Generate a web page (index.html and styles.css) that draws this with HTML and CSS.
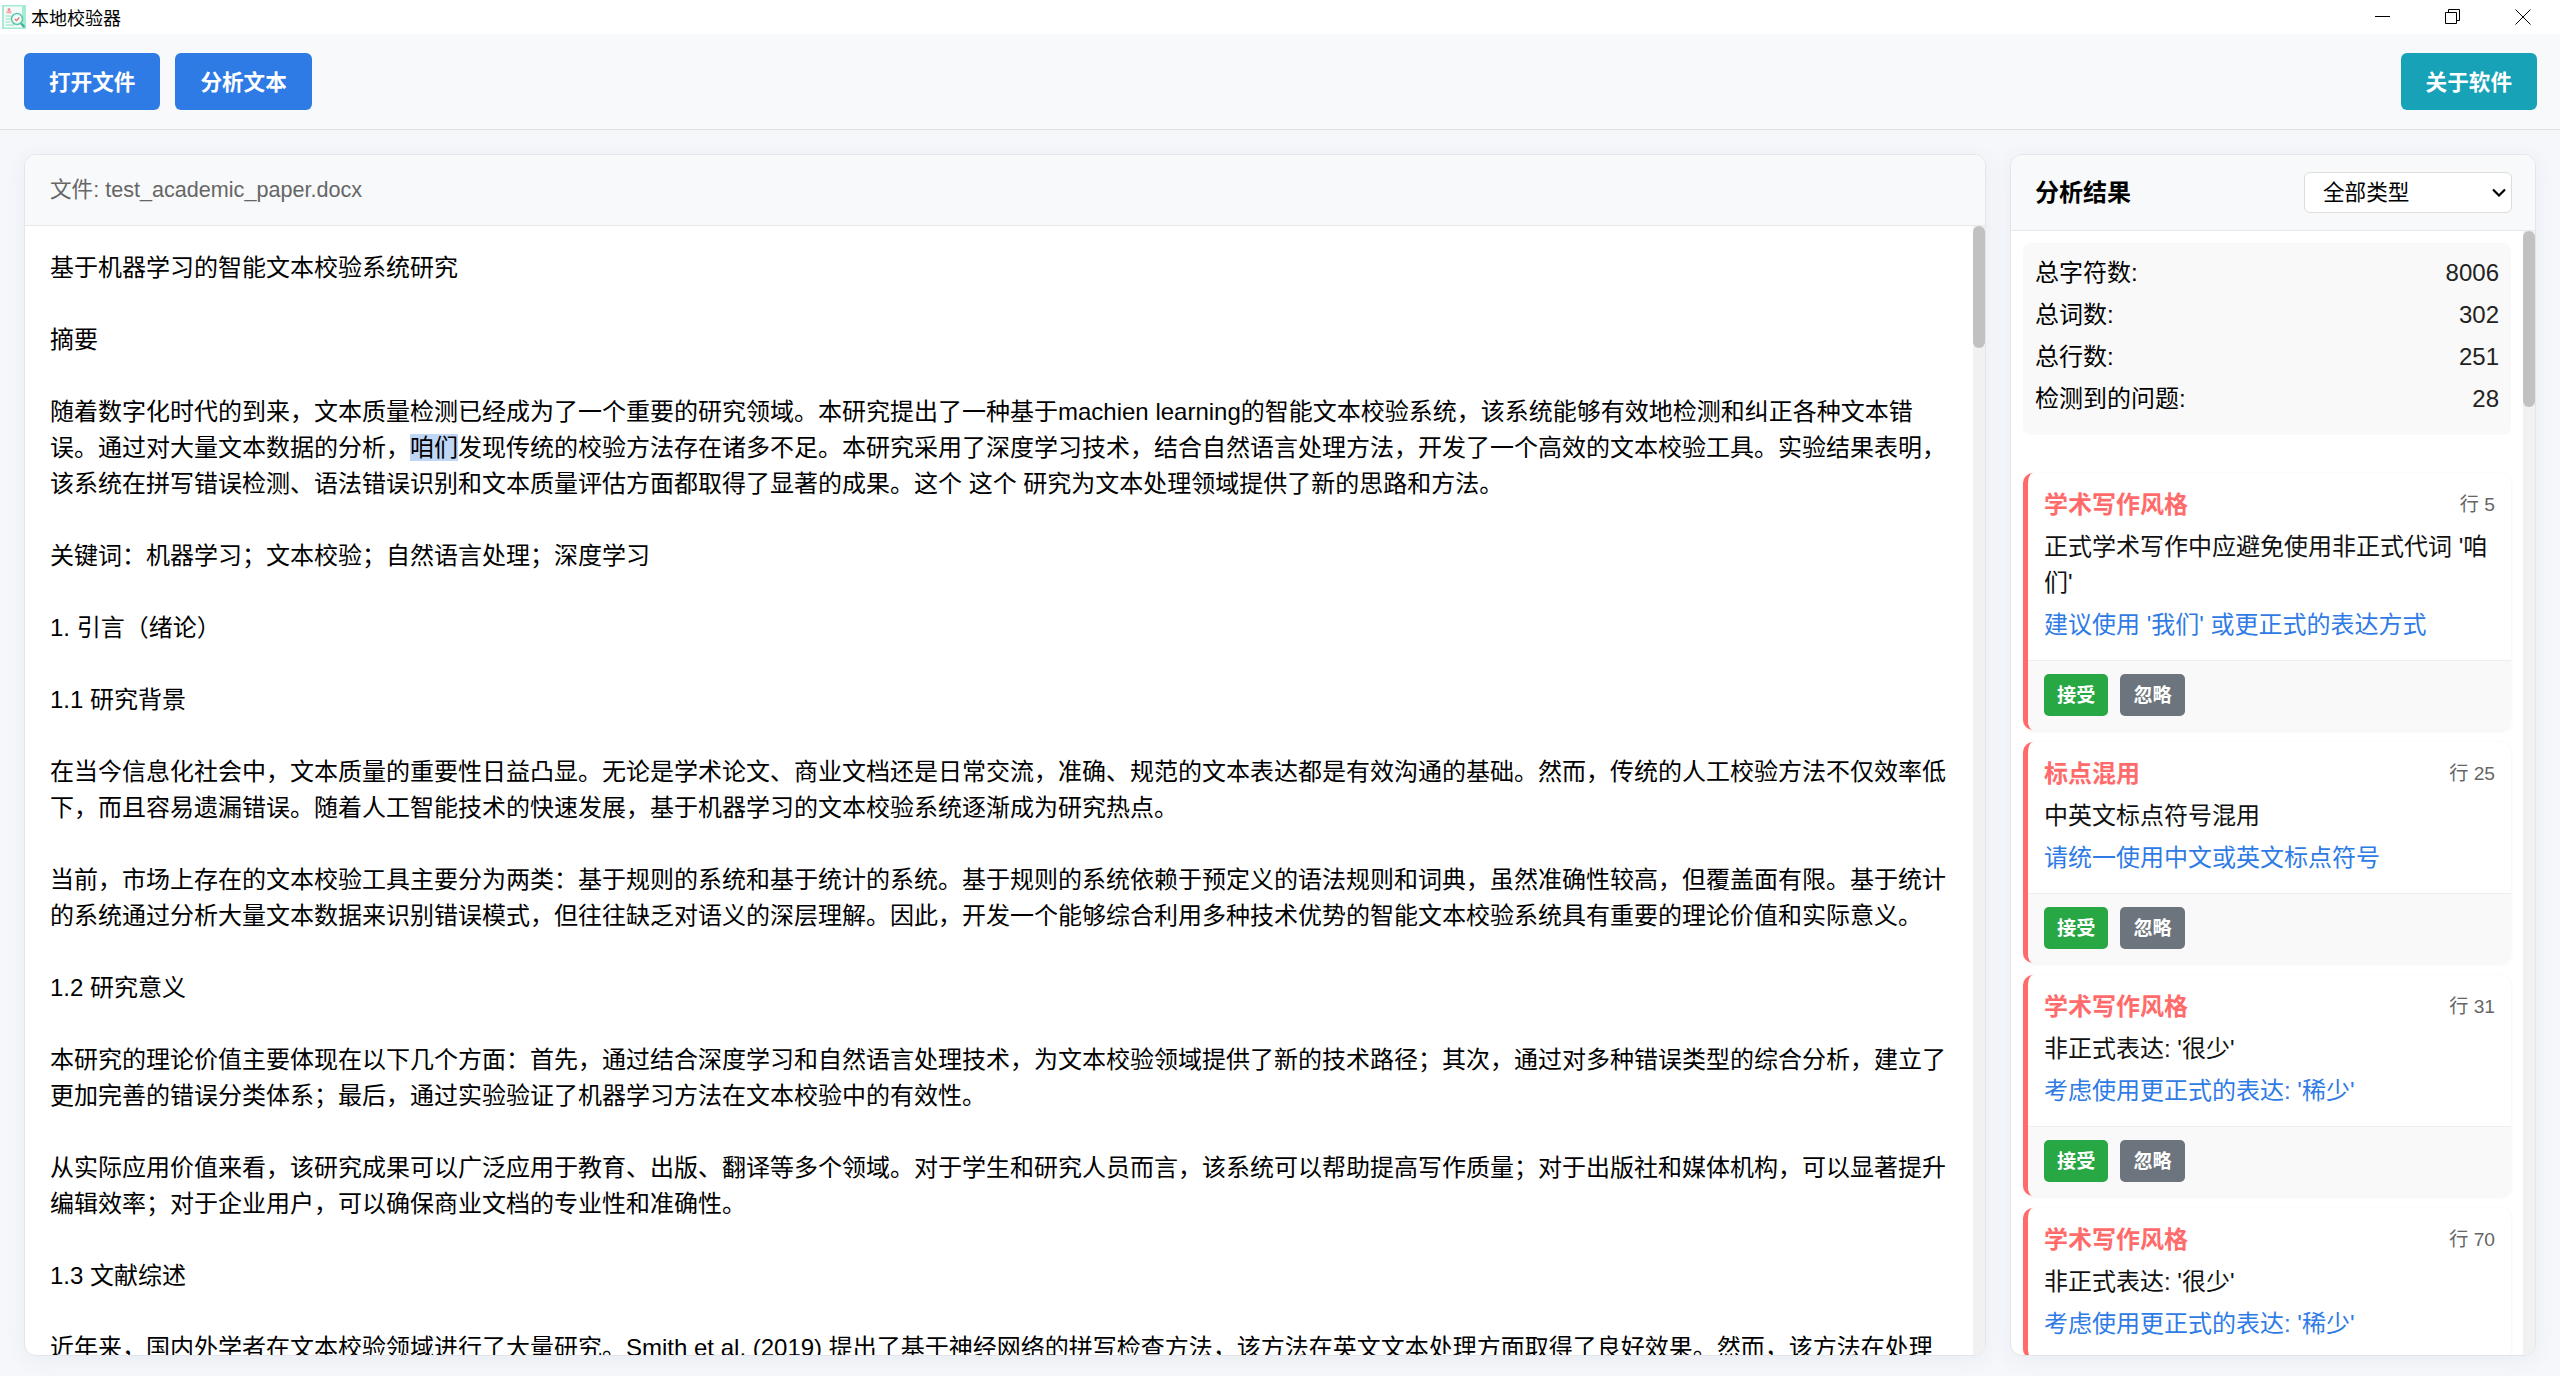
FILE: index.html
```html
<!DOCTYPE html>
<html lang="zh-CN">
<head>
<meta charset="utf-8">
<title>本地校验器</title>
<link rel="stylesheet" href="styles.css">
</head>
<body>
<div class="app">
  <header class="titlebar">
    <div class="app-title">
      <svg class="app-icon" viewBox="0 0 24 24" aria-hidden="true">
        <rect width="24" height="24" fill="#a5ecd4"/>
        <rect x="2" y="1.500" width="18" height="21" fill="#f3fbf8"/>
        <circle cx="7" cy="4.500" r="1.500" fill="#f08f8f"/>
        <rect x="4.500" y="6" width="5" height="2.500" fill="#f4b0b0"/>
        <path d="M3.500 11h6M3.500 14h5M3.500 17h5M3.500 20h9" stroke="#8fdcc4" stroke-width="1"/>
        <circle cx="15" cy="14" r="5.500" fill="#eefbf6" stroke="#5cc6ae" stroke-width="1.500"/>
        <path d="M12.800 14l1.700 1.700 2.800-3.200" fill="none" stroke="#ee6a6a" stroke-width="1.200"/>
        <path d="M19 18.500l3.500 3.500" stroke="#3faf9c" stroke-width="2.200"/>
      </svg>
      <span>本地校验器</span>
    </div>
    <div class="window-controls">
      <svg class="win-icon" viewBox="0 0 16 16" aria-hidden="true"><path d="M0 7.500h15" stroke="#000" fill="none"/></svg>
      <svg class="win-icon" viewBox="0 0 16 16" aria-hidden="true"><path d="M.5 3.500h11v11h-11zM3.500 3.500v-3h11v11h-3" stroke="#000" fill="none"/></svg>
      <svg class="win-icon" viewBox="0 0 16 16" aria-hidden="true"><path d="M.5.500l15 15M15.500.500l-15 15" stroke="#000" fill="none"/></svg>
    </div>
  </header>

  <nav class="toolbar">
    <div class="toolbar-group">
      <button class="btn btn-primary">打开文件</button>
      <button class="btn btn-primary">分析文本</button>
    </div>
    <button class="btn btn-info">关于软件</button>
  </nav>

  <main class="workspace">
    <section class="panel doc-panel">
      <div class="panel-header doc-header">文件: test_academic_paper.docx</div>
      <div class="panel-body">
<div class="doc-text">基于机器学习的智能文本校验系统研究

摘要

随着数字化时代的到来，文本质量检测已经成为了一个重要的研究领域。本研究提出了一种基于machien learning的智能文本校验系统，该系统能够有效地检测和纠正各种文本错误。通过对大量文本数据的分析，<mark class="hl">咱们</mark>发现传统的校验方法存在诸多不足。本研究采用了深度学习技术，结合自然语言处理方法，开发了一个高效的文本校验工具。实验结果表明，该系统在拼写错误检测、语法错误识别和文本质量评估方面都取得了显著的成果。这个 这个 研究为文本处理领域提供了新的思路和方法。

关键词：机器学习；文本校验；自然语言处理；深度学习

1. 引言（绪论）

1.1 研究背景

在当今信息化社会中，文本质量的重要性日益凸显。无论是学术论文、商业文档还是日常交流，准确、规范的文本表达都是有效沟通的基础。然而，传统的人工校验方法不仅效率低下，而且容易遗漏错误。随着人工智能技术的快速发展，基于机器学习的文本校验系统逐渐成为研究热点。

当前，市场上存在的文本校验工具主要分为两类：基于规则的系统和基于统计的系统。基于规则的系统依赖于预定义的语法规则和词典，虽然准确性较高，但覆盖面有限。基于统计的系统通过分析大量文本数据来识别错误模式，但往往缺乏对语义的深层理解。因此，开发一个能够综合利用多种技术优势的智能文本校验系统具有重要的理论价值和实际意义。

1.2 研究意义

本研究的理论价值主要体现在以下几个方面：首先，通过结合深度学习和自然语言处理技术，为文本校验领域提供了新的技术路径；其次，通过对多种错误类型的综合分析，建立了更加完善的错误分类体系；最后，通过实验验证了机器学习方法在文本校验中的有效性。

从实际应用价值来看，该研究成果可以广泛应用于教育、出版、翻译等多个领域。对于学生和研究人员而言，该系统可以帮助提高写作质量；对于出版社和媒体机构，可以显著提升编辑效率；对于企业用户，可以确保商业文档的专业性和准确性。

1.3 文献综述

近年来，国内外学者在文本校验领域进行了大量研究。Smith et al. (2019) 提出了基于神经网络的拼写检查方法，该方法在英文文本处理方面取得了良好效果。然而，该方法在处理</div>
        <div class="scrollbar"><div class="thumb thumb-doc"></div></div>
      </div>
    </section>

    <aside class="panel result-panel">
      <div class="panel-header result-header">
        <h2 class="result-title">分析结果</h2>
        <div class="filter-wrap">
          <select class="type-filter"><option>全部类型</option></select>
          <svg class="filter-arrow" viewBox="0 0 14 9" aria-hidden="true"><path d="M1 1.500l6 6 6-6" fill="none" stroke="#000" stroke-width="2.200"/></svg>
        </div>
      </div>
      <div class="panel-body">
        <div class="result-list">
          <dl class="stats">
            <div class="stat-row"><dt>总字符数:</dt><dd>8006</dd></div>
            <div class="stat-row"><dt>总词数:</dt><dd>302</dd></div>
            <div class="stat-row"><dt>总行数:</dt><dd>251</dd></div>
            <div class="stat-row"><dt>检测到的问题:</dt><dd>28</dd></div>
          </dl>

          <article class="issue">
            <div class="issue-main">
              <div class="issue-head"><span class="issue-type">学术写作风格</span><span class="issue-line">行 5</span></div>
              <p class="issue-msg">正式学术写作中应避免使用非正式代词 '咱们'</p>
              <p class="issue-fix">建议使用 '我们' 或更正式的表达方式</p>
            </div>
            <div class="issue-actions"><button class="mini mini-accept">接受</button><button class="mini mini-ignore">忽略</button></div>
          </article>

          <article class="issue">
            <div class="issue-main">
              <div class="issue-head"><span class="issue-type">标点混用</span><span class="issue-line">行 25</span></div>
              <p class="issue-msg">中英文标点符号混用</p>
              <p class="issue-fix">请统一使用中文或英文标点符号</p>
            </div>
            <div class="issue-actions"><button class="mini mini-accept">接受</button><button class="mini mini-ignore">忽略</button></div>
          </article>

          <article class="issue">
            <div class="issue-main">
              <div class="issue-head"><span class="issue-type">学术写作风格</span><span class="issue-line">行 31</span></div>
              <p class="issue-msg">非正式表达: '很少'</p>
              <p class="issue-fix">考虑使用更正式的表达: '稀少'</p>
            </div>
            <div class="issue-actions"><button class="mini mini-accept">接受</button><button class="mini mini-ignore">忽略</button></div>
          </article>

          <article class="issue">
            <div class="issue-main">
              <div class="issue-head"><span class="issue-type">学术写作风格</span><span class="issue-line">行 70</span></div>
              <p class="issue-msg">非正式表达: '很少'</p>
              <p class="issue-fix">考虑使用更正式的表达: '稀少'</p>
            </div>
          </article>
        </div>
        <div class="scrollbar"><div class="thumb thumb-result"></div></div>
      </div>
    </aside>
  </main>
</div>
</body>
</html>
```

FILE: styles.css
```css
* { box-sizing: border-box; }
html, body { height: 100%; }
body {
  margin: 0;
  font-family: "Liberation Sans", "Noto Sans CJK SC", sans-serif;
  color: #000;
  background: #f5f7fa;
  overflow: hidden;
}
.app { display: flex; flex-direction: column; height: 100vh; }

.titlebar {
  flex: 0 0 34px;
  display: flex;
  align-items: center;
  justify-content: space-between;
  background: #fff;
}
.app-title { display: flex; align-items: center; gap: 5px; padding-left: 2px; font-size: 18px; }
.app-icon { width: 24px; height: 24px; display: block; }
.window-controls { display: flex; gap: 54px; padding-right: 29px; }
.win-icon { width: 16px; height: 16px; display: block; }

.toolbar {
  flex: 0 0 96px;
  display: flex;
  align-items: center;
  justify-content: space-between;
  padding: 0 23px 0 24px;
  background: #f8f9fa;
  border-bottom: 1px solid #e0e0e0;
}
.toolbar-group { display: flex; gap: 15px; }
.btn {
  height: 57px;
  padding: 0 25px 2px;
  border: 0;
  border-radius: 6px;
  color: #fff;
  font: bold 21.600px "Liberation Sans", "Noto Sans CJK SC", sans-serif;
}
.btn-primary { background: #2f7be5; }
.btn-info { background: #17a2b8; }

.workspace {
  flex: 1;
  min-height: 0;
  display: flex;
  gap: 24px;
  padding: 24px 24px 20px;
}
.panel {
  display: flex;
  flex-direction: column;
  min-height: 0;
  background: #fff;
  border: 1px solid #e3e5e8;
  border-radius: 12px;
  box-shadow: 0 4px 20px rgba(90, 120, 160, .08);
  overflow: hidden;
}
.doc-panel { flex: 1; min-width: 0; }
.result-panel { flex: 0 0 526px; }
.panel-header {
  flex: none;
  background: #f8f9fa;
  border-bottom: 1px solid #e8e8e8;
}
.doc-header {
  height: 71px;
  padding: 0 25px 6px;
  display: flex;
  align-items: center;
  font-size: 21.600px;
  color: #666;
}
.result-header {
  height: 76px;
  padding: 0 23px 0 24px;
  display: flex;
  align-items: center;
  justify-content: space-between;
}
.result-title { margin: 0 0 4px; font-size: 24px; font-weight: bold; }
.filter-wrap { position: relative; display: flex; }
.type-filter {
  appearance: none;
  width: 208px;
  height: 41px;
  padding: 0 0 1px 18px;
  background: #fff;
  border: 1px solid #ddd;
  border-radius: 6px;
  color: #000;
  font: 21.600px "Liberation Sans", "Noto Sans CJK SC", sans-serif;
}
.filter-arrow {
  position: absolute;
  top: 16px;
  right: 6px;
  width: 14px;
  height: 9px;
  pointer-events: none;
}
.panel-body { flex: 1; min-height: 0; display: flex; overflow: hidden; }
.scrollbar { flex: 0 0 12px; background: #f1f1f1; }
.thumb { width: 100%; background: #c1c1c1; border-radius: 6px; }
.thumb-doc { height: 122px; }
.thumb-result { height: 176px; }

.doc-text {
  flex: 1;
  min-width: 0;
  padding: 24px 23px 0 25px;
  font-size: 24px;
  line-height: 36px;
  white-space: pre-wrap;
}
.hl { background: #bfd6f6; color: inherit; }

.result-list { flex: 1; min-width: 0; padding: 12px 12px 0; }
.stats {
  margin: 0 0 38px;
  padding: 12px 12px 12px;
  background: #f9f9f9;
  border-radius: 8px;
  font-size: 24px;
  line-height: 36px;
}
.stat-row { display: flex; justify-content: space-between; margin-bottom: 6px; }
.stat-row dt, .stat-row dd { margin: 0; }
.stat-row dd { color: #222; }

.issue {
  margin-bottom: 12px;
  background: #fff;
  border-left: 5px solid #ff6b6b;
  border-radius: 10px;
  box-shadow: 0 1px 4px rgba(0, 0, 0, .06);
  overflow: hidden;
}
.issue-main { padding: 14px 16px 17px; }
.issue-head { display: flex; justify-content: space-between; align-items: center; line-height: 36px; }
.issue-type { font-size: 24px; font-weight: bold; color: #ff6b6b; }
.issue-line { font-size: 19.200px; color: #666; }
.issue-msg { margin: 6px 0; font-size: 24px; line-height: 36px; color: #111; }
.issue-fix { margin: 0; font-size: 24px; line-height: 36px; color: #2f7be5; }
.issue-actions {
  display: flex;
  gap: 12px;
  padding: 13px 16px 14px;
  background: #f9f9f9;
  border-top: 1px solid #eee;
}
.mini {
  height: 42px;
  padding: 0 13px 2px;
  border: 0;
  border-radius: 5px;
  color: #fff;
  font: bold 19.200px "Liberation Sans", "Noto Sans CJK SC", sans-serif;
}
.mini-accept { background: #28a745; }
.mini-ignore { background: #6c757d; }
```
